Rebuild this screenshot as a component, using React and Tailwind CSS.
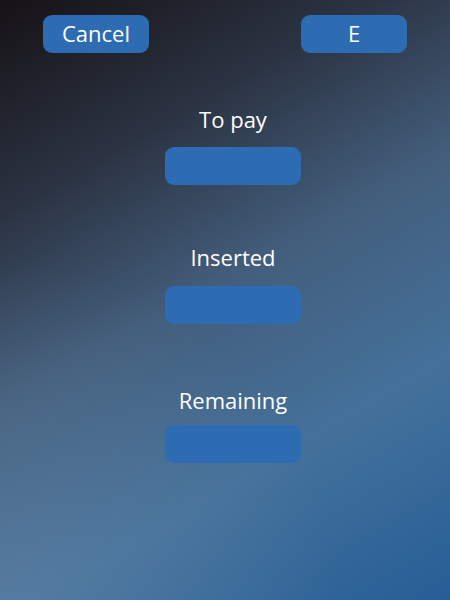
const Btn = ({ children }) => (
  <button className="w-[106px] h-[38px] rounded-[9px] bg-[#2d6cb2] text-white text-[22px] leading-[30px] flex items-center justify-center pb-[3px]">
    {children}
  </button>
);

const Field = ({ label, gap }) => (
  <div className="flex flex-col items-center">
    <div className="text-white text-[22px] leading-[30px]">{label}</div>
    <div className={`w-[136px] h-[38px] rounded-[9px] bg-[#2d6cb2] ${gap}`} />
  </div>
);

export default function App() {
  return (
    <div
      className="w-[450px] h-[600px] overflow-hidden bg-[radial-gradient(circle_at_0%_100%,rgba(110,140,170,0.4)_0%,rgba(110,140,170,0)_45%),linear-gradient(150deg,#161216_0%,#2b3342_25%,#435e7c_48%,#44719b_72%,#265e96_100%)]"
      style={{ fontFamily: '"Open Sans", "Noto Sans", sans-serif' }}
    >
      <div className="flex justify-between px-[43px] pt-[15px]">
        <Btn>Cancel</Btn>
        <Btn>E</Btn>
      </div>
      <div className="flex flex-col items-center pl-[16px] pt-[51px]">
        <Field label="To pay" gap="mt-[13px]" />
        <div className="h-[57px]" />
        <Field label="Inserted" gap="mt-[14px]" />
        <div className="h-[61px]" />
        <Field label="Remaining" gap="mt-[10px]" />
      </div>
    </div>
  );
}
